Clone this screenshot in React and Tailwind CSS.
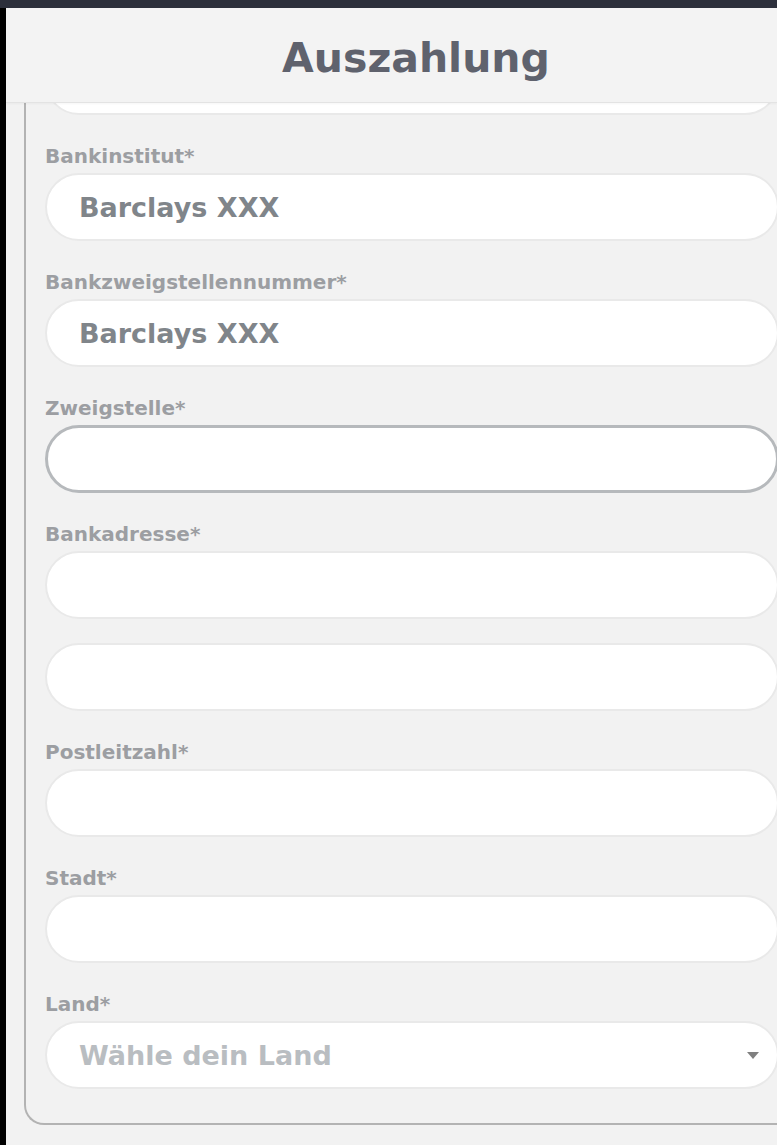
const font = { fontFamily: '"DejaVu Sans", "Liberation Sans", sans-serif' };

function Label({ children }) {
  return (
    <div className="h-[24px] leading-[24px] text-[20px] font-bold text-[#9c9ea2] mb-[5px]">
      {children}
    </div>
  );
}

function Input({ value, placeholder, focused, select }) {
  return (
    <div
      className={
        'relative h-[68px] w-[734px] rounded-full bg-white flex items-center pl-[32px] ' +
        (focused ? 'border-[3px] border-[#b6b9bc]' : 'border-2 border-[#e9e9e9]')
      }
    >
      {value && <span className="text-[27px] font-bold text-[#80858a] leading-none">{value}</span>}
      {placeholder && <span className="text-[27px] font-bold text-[#b9bdc1] leading-none">{placeholder}</span>}
      {select && (
        <svg className="absolute right-[18px] top-[29px]" width="12" height="7" viewBox="0 0 12 7">
          <path d="M0 0h12L6 7z" fill="#808080" />
        </svg>
      )}
    </div>
  );
}

function Field({ label, children }) {
  return (
    <div className="flex flex-col">
      <Label>{label}</Label>
      {children}
    </div>
  );
}

export default function App() {
  return (
    <div className="w-[777px] h-[1145px] overflow-hidden bg-[#2c2f3b] flex flex-col" style={font}>
      <div className="h-[8px] shrink-0" />
      <div className="flex flex-1 min-h-0">
        <div className="w-[6px] bg-black shrink-0" />
        <div className="flex-1 flex flex-col bg-[#f2f2f2] min-w-0">
          <div className="h-[95px] shrink-0 bg-[#f3f3f3] border-b border-[#e3e3e3] shadow-[0_1px_2px_rgba(0,0,0,0.04)] flex justify-center pl-[49px] pt-[26px] relative z-10">
            <h1 className="text-[41px] leading-[48px] font-bold text-[#5f626d]">Auszahlung</h1>
          </div>
          <div className="flex-1 min-h-0 overflow-hidden">
            <div className="ml-[18px] w-[800px] border-l-2 border-b-2 border-[#b3b3b3] rounded-bl-[20px] pl-[19px] pb-[34px] flex flex-col -mt-[56px]">
              <Input />
              <div className="h-[29px]" />
              <div className="flex flex-col gap-[29px]">
                <Field label="Bankinstitut*">
                  <Input value="Barclays XXX" />
                </Field>
                <Field label="Bankzweigstellennummer*">
                  <Input value="Barclays XXX" />
                </Field>
                <Field label="Zweigstelle*">
                  <Input focused />
                </Field>
                <Field label="Bankadresse*">
                  <div className="flex flex-col gap-[24px]">
                    <Input />
                    <Input />
                  </div>
                </Field>
                <Field label="Postleitzahl*">
                  <Input />
                </Field>
                <Field label="Stadt*">
                  <Input />
                </Field>
                <Field label="Land*">
                  <Input placeholder="Wähle dein Land" select />
                </Field>
              </div>
            </div>
          </div>
        </div>
      </div>
    </div>
  );
}
